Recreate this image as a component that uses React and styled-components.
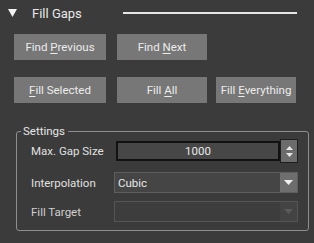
import React from "react";
import styled, { createGlobalStyle } from "styled-components";

const FONT = `"Roboto", "Noto Sans", sans-serif`;

const Global = createGlobalStyle`
  html, body { margin: 0; padding: 0; background: #3b3b3b; }
  body { font-family: ${FONT}; }
`;

const Root = styled.div`
  width: 314px;
  height: 243px;
  background: #3b3b3b;
  color: #e6e6e6;
  overflow: hidden;
  box-sizing: border-box;
`;

const Header = styled.div`
  height: 26px;
  display: flex;
  align-items: center;
  padding-left: 8px;
`;

const Title = styled.span`
  font-size: 13px;
  margin-left: 15px;
  width: 91px;
  color: #e8e8e8;
`;

const Rule = styled.div`
  width: 174px;
  height: 2px;
  background: #e6e6e6;
  margin-top: -1px;
`;

const ButtonRow = styled.div`
  display: flex;
  padding-left: 14px;
  margin-top: ${(p) => p.$top}px;
`;

const Button = styled.button`
  width: ${(p) => p.$w}px;
  height: 26px;
  margin-right: ${(p) => p.$gap || 0}px;
  background: #777777;
  border: none;
  color: #ececec;
  font-family: ${FONT};
  font-size: 11.5px;
  padding: 0;
  u { text-decoration-thickness: 1px; text-underline-offset: 2px; }
`;

const Group = styled.fieldset`
  margin: 21px 0 0 16px;
  width: 293px;
  box-sizing: border-box;
  border: 1px solid #8e8e8e;
  border-radius: 3px;
  padding: 1px 10px 8px 14px;
`;

const Legend = styled.legend`
  font-size: 11.5px;
  line-height: 14px;
  padding: 0 3px 0 2px;
  margin-left: -10px;
  color: #e6e6e6;
`;

const Row = styled.div`
  display: flex;
  align-items: center;
  height: ${(p) => p.$h}px;
  margin-top: ${(p) => p.$top || 0}px;
`;

const Label = styled.span`
  width: 83px;
  font-size: 11.5px;
  color: ${(p) => (p.$dim ? "#d0d0d0" : "#e0e0e0")};
`;

const SpinInput = styled.div`
  margin-left: 2px;
  width: 164px;
  height: 20px;
  box-sizing: border-box;
  border: 2px solid #121212;
  background: #474747;
  display: flex;
  align-items: center;
  justify-content: center;
  font-size: 11.5px;
  color: #e8e8e8;
`;

const SpinButton = styled.div`
  width: 18px;
  height: 24px;
  box-sizing: border-box;
  border: 1px solid #1e1e1e;
  background: #6c6c6c;
  display: flex;
  flex-direction: column;
  align-items: center;
  justify-content: center;
  gap: 3px;
`;

const Combo = styled.div`
  width: 184px;
  height: 21px;
  box-sizing: border-box;
  border: 1px solid ${(p) => (p.$disabled ? "#555555" : "#5e5e5e")};
  background: ${(p) => (p.$disabled ? "#3d3d3d" : "#454545")};
  display: flex;
  align-items: stretch;
`;

const ComboText = styled.div`
  flex: 1;
  display: flex;
  align-items: center;
  padding-left: 3px;
  font-size: 11.5px;
  color: #e8e8e8;
`;

const ComboArrow = styled.div`
  width: 17px;
  background: ${(p) => (p.$disabled ? "#434343" : "#6e6e6e")};
  display: flex;
  align-items: center;
  justify-content: center;
`;

const Tri = ({ dir = "down", w = 7, h = 4, color = "#eee" }) => (
  <svg width={w} height={h} viewBox={`0 0 ${w} ${h}`}>
    {dir === "down" ? (
      <polygon points={`0,0 ${w},0 ${w / 2},${h}`} fill={color} />
    ) : (
      <polygon points={`0,${h} ${w},${h} ${w / 2},0`} fill={color} />
    )}
  </svg>
);

export default function App() {
  return (
    <Root>
      <Global />
      <Header>
        <Tri w={9} h={8} color="#f2f2f2" />
        <Title>Fill Gaps</Title>
        <Rule />
      </Header>
      <ButtonRow $top={8}>
        <Button $w={92} $gap={11}>
          Find <u>P</u>revious
        </Button>
        <Button $w={90}>
          Find <u>N</u>ext
        </Button>
      </ButtonRow>
      <ButtonRow $top={17}>
        <Button $w={92} $gap={11}>
          <u>F</u>ill Selected
        </Button>
        <Button $w={90} $gap={9}>
          Fill <u>A</u>ll
        </Button>
        <Button $w={80}>
          Fill <u>E</u>verything
        </Button>
      </ButtonRow>
      <Group>
        <Legend>Settings</Legend>
        <Row $h={24}>
          <Label>Max. Gap Size</Label>
          <SpinInput>1000</SpinInput>
          <SpinButton>
            <Tri dir="up" w={7} h={4} color="#e8e8e8" />
            <Tri dir="down" w={7} h={4} color="#e8e8e8" />
          </SpinButton>
        </Row>
        <Row $h={21} $top={9}>
          <Label>Interpolation</Label>
          <Combo>
            <ComboText>Cubic</ComboText>
            <ComboArrow>
              <Tri w={9} h={5} color="#f0f0f0" />
            </ComboArrow>
          </Combo>
        </Row>
        <Row $h={21} $top={8}>
          <Label $dim>Fill Target</Label>
          <Combo $disabled>
            <ComboText />
            <ComboArrow $disabled>
              <Tri w={9} h={5} color="#5a5a5a" />
            </ComboArrow>
          </Combo>
        </Row>
      </Group>
    </Root>
  );
}
